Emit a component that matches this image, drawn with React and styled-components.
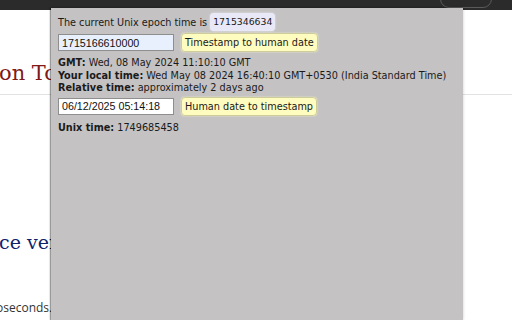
import React from "react";
import styled, { createGlobalStyle } from "styled-components";

const Global = createGlobalStyle`
  html, body { margin: 0; padding: 0; }
  body { width: 512px; height: 320px; overflow: hidden; background: #fff; }
`;

const Page = styled.div`
  position: relative;
  width: 512px;
  height: 320px;
  overflow: hidden;
  background: #fff;
  display: flex;
  flex-direction: column;
`;

const TopBar = styled.div`
  height: 10px;
  flex: none;
  background: #2b2b2b;
  display: flex;
  justify-content: flex-end;
  align-items: flex-end;
  padding-right: 20px;
`;

const Pill = styled.div`
  width: 52px;
  height: 18px;
  margin-bottom: 2px;
  border: 1px solid #5a5a5a;
  border-radius: 9px;
  display: flex;
  padding-left: 11px;
  align-items: flex-end;
  padding-bottom: 12px;
  box-sizing: border-box;
`;

const PillDot = styled.div`
  width: 8px;
  height: 4px;
  background: #d8d8d8;
`;

const Heading = styled.h1`
  margin: 50px 0 0 -1px;
  font-family: "DejaVu Serif", "Liberation Serif", serif;
  font-weight: normal;
  font-size: 21px;
  line-height: 26px;
  color: #821818;
  white-space: nowrap;
`;

const Rule = styled.div`
  height: 1px;
  background: #e2e2e2;
  margin-top: 8px;
`;

const SubHeading = styled.h2`
  margin: 135px 0 0 -1px;
  font-family: "DejaVu Serif", "Liberation Serif", serif;
  font-weight: normal;
  font-size: 19px;
  line-height: 24px;
  color: #0f1f6e;
  white-space: nowrap;
`;

const Para = styled.p`
  margin: 46px 0 0 -4px;
  font-family: "Open Sans", "Noto Sans", sans-serif;
  font-size: 12px;
  line-height: 16px;
  color: #333;
  white-space: nowrap;
`;

const Popup = styled.div`
  position: absolute;
  left: 51px;
  top: 8px;
  width: 412px;
  bottom: 0;
  background: #c4c2c3;
  box-shadow: -1px 0 1px rgba(0, 0, 0, 0.35), 0 0 3px rgba(0, 0, 0, 0.2);
  padding: 4px 7px;
  box-sizing: border-box;
  font-family: "DejaVu Sans", Verdana, sans-serif;
  font-size: 9.7px;
  color: #1a1a1a;
  display: flex;
  flex-direction: column;
`;

const Line = styled.div`
  line-height: 12.5px;
  white-space: nowrap;
`;

const FirstLine = styled.div`
  display: flex;
  align-items: center;
  gap: 3px;
  height: 18px;
  margin-top: 1px;
  white-space: nowrap;
`;

const Badge = styled.span`
  background: #e9e8f6;
  border-radius: 4px;
  padding: 2px 3px;
  font-size: 9.3px;
  line-height: 14px;
  box-shadow: 0 0 2px #eeeefa;
`;

const FormRow = styled.div`
  display: flex;
  align-items: center;
  gap: 7px;
  margin-top: ${(p) => p.$mt}px;
  margin-bottom: ${(p) => p.$mb}px;
`;

const Field = styled.input`
  width: 116px;
  height: 17px;
  box-sizing: border-box;
  border: 1px solid #8e8e8e;
  background: ${(p) => (p.$filled ? "#e8f0fe" : "#ffffff")};
  font-family: "Liberation Sans", Arial, sans-serif;
  font-size: 10.7px;
  color: #111;
  padding: 0 3px;
  margin: 0;
  outline: none;
`;

const Button = styled.button`
  height: 19px;
  box-sizing: border-box;
  background: #fffcc0;
  border: 1px solid #cfcc9c;
  border-radius: 4px;
  box-shadow: 0 0 2px rgba(255, 255, 200, 0.8);
  font-family: "DejaVu Sans", Verdana, sans-serif;
  font-size: 9.7px;
  color: #1a1a1a;
  padding: 0 3px;
  margin: 0;
  line-height: 17px;
`;

const Label = styled.b`
  font-weight: bold;
`;

export default function App() {
  return (
    <>
      <Global />
      <Page>
        <TopBar>
          <Pill>
            <PillDot />
          </Pill>
        </TopBar>
        <Heading>on Tools</Heading>
        <Rule />
        <SubHeading>ce version</SubHeading>
        <Para>oseconds.</Para>
        <Popup>
          <FirstLine>
            The current Unix epoch time is <Badge>1715346634</Badge>
          </FirstLine>
          <FormRow $mt={2} $mb={5}>
            <Field $filled defaultValue="1715166610000" />
            <Button>Timestamp to human date</Button>
          </FormRow>
          <Line>
            <Label>GMT:</Label> Wed, 08 May 2024 11:10:10 GMT
          </Line>
          <Line>
            <Label>Your local time:</Label> Wed May 08 2024 16:40:10 GMT+0530 (India Standard Time)
          </Line>
          <Line>
            <Label>Relative time:</Label> approximately 2 days ago
          </Line>
          <FormRow $mt={2} $mb={6}>
            <Field defaultValue="06/12/2025 05:14:18" />
            <Button>Human date to timestamp</Button>
          </FormRow>
          <Line>
            <Label>Unix time:</Label> 1749685458
          </Line>
        </Popup>
      </Page>
    </>
  );
}
